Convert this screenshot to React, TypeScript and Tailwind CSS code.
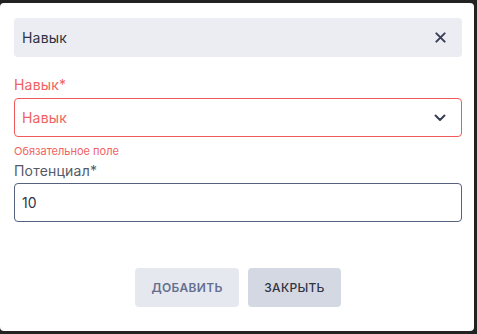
import { useState } from 'react';

const font = { fontFamily: 'Inter, "Noto Sans", sans-serif' };

function XIcon() {
  return (
    <svg width="11" height="11" viewBox="0 0 12 12" fill="none">
      <path d="M1.5 1.5L10.5 10.5M10.5 1.5L1.5 10.5" stroke="#3a3f55" strokeWidth="2.2" strokeLinecap="round" />
    </svg>
  );
}

function Chevron() {
  return (
    <svg width="12" height="8" viewBox="0 0 12 8" fill="none">
      <path d="M1.5 1.5L6 6L10.5 1.5" stroke="#3a3f55" strokeWidth="2" strokeLinecap="round" strokeLinejoin="round" />
    </svg>
  );
}

export default function App() {
  const [value, setValue] = useState('10');

  return (
    <div className="h-[334px] w-[477px] bg-[#222222] pt-[3px]" style={font}>
      <div className="h-[328px] w-[474px] rounded-[4px] bg-white pl-[14px] pr-[12px] pt-[15px]">
        <div className="flex h-[39px] items-center justify-between rounded-[4px] bg-[#ecedf2] pl-[8px] pr-[16px]">
          <span className="text-[14px] tracking-[0.2px] text-[#2f3342]">Навык</span>
          <XIcon />
        </div>

        <div className="mt-[19px] text-[14px] leading-[18px] tracking-[0.2px] text-[#f06262]">Навык*</div>
        <div className="mt-[4px] flex h-[39px] items-center justify-between rounded-[4px] border border-[#f05a5a] pl-[7px] pr-[15px]">
          <span className="text-[14px] tracking-[0.2px] text-[#f06262]">Навык</span>
          <Chevron />
        </div>
        <div className="mt-[7px] text-[11px] leading-[14px] text-[#f06262]">Обязательное поле</div>

        <div className="mt-[4px] text-[14px] leading-[18px] tracking-[0.2px] text-[#555a66]">Потенциал*</div>
        <input
          value={value}
          onChange={(e) => setValue(e.target.value)}
          className="mt-[3px] h-[39px] w-full rounded-[4px] border border-[#56607f] px-[7px] text-[14px] text-[#2f3342] outline-none"
          style={font}
        />

        <div className="mt-[46px] flex justify-center gap-[9px]">
          <button className="h-[39px] w-[104px] rounded-[4px] bg-[#e6e8ef] text-[12px] font-semibold tracking-[0.3px] text-[#646f8f]">
            ДОБАВИТЬ
          </button>
          <button className="h-[39px] w-[93px] rounded-[4px] bg-[#d4d8e2] text-[12px] font-medium tracking-[0.3px] text-[#2f3342]">
            ЗАКРЫТЬ
          </button>
        </div>
      </div>
    </div>
  );
}
